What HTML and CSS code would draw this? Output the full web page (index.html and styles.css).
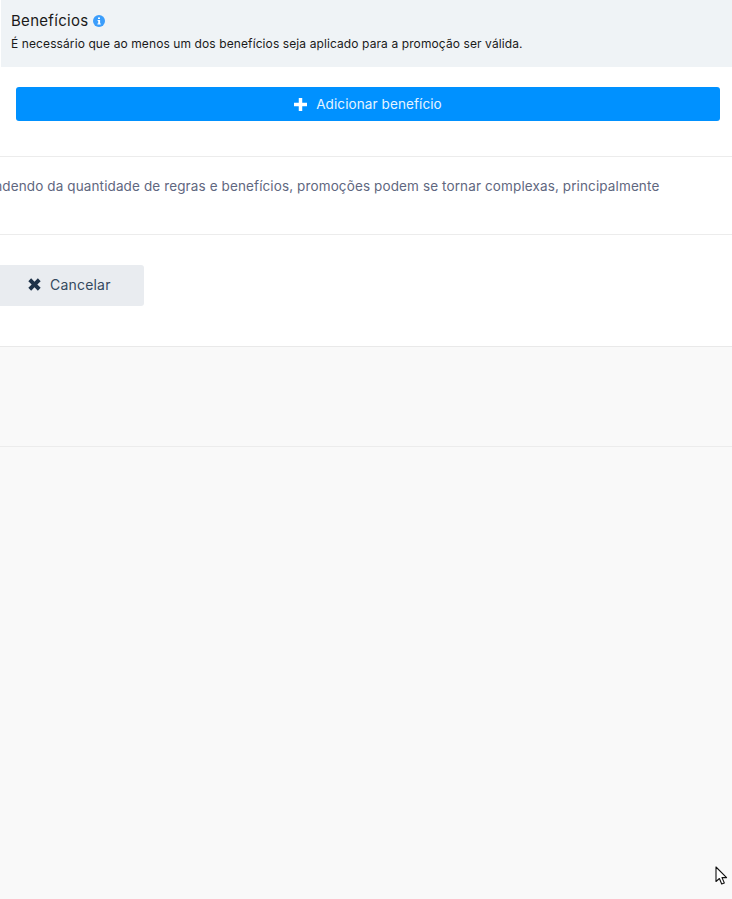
FILE: index.html
```html
<!DOCTYPE html>
<html lang="pt-BR">

<head>
    <meta charset="UTF-8">
    <meta name="viewport" content="width=device-width, initial-scale=1.0">
    <title>Promoção</title>
    <link rel="stylesheet" href="styles.css">
</head>

<body>
    <div class="card">
        <div class="section-header">
            <h2>Benefícios
                <svg class="info-icon" viewBox="0 0 12 12" width="12" height="12" aria-hidden="true">
                    <circle cx="6" cy="6" r="6" fill="#3b9dfb"/>
                    <path d="M5 2.4h2v1.6H5zM4.6 5h2.5v3.4h.7v1.1H4.4V8.4h.8V6.1h-.6z" fill="#fff"/>
                </svg>
            </h2>
            <p>É necessário que ao menos um dos benefícios seja aplicado para a promoção ser válida.</p>
        </div>

        <div class="section-body">
            <button class="button button-primary">
                <svg viewBox="0 0 12 12" width="13" height="13" aria-hidden="true">
                    <path d="M4.4 0h3.2v4.4H12v3.2H7.6V12H4.4V7.6H0V4.4h4.4z" fill="#fff"/>
                </svg>
                Adicionar benefício
            </button>
        </div>

        <div class="notice">
            <p>Dependendo da quantidade de regras e benefícios, promoções podem se tornar complexas, principalmente</p>
        </div>

        <div class="actions">
            <button class="button button-cancel">
                <svg viewBox="0 0 12 12" width="13" height="13" aria-hidden="true">
                    <path d="M2.9.3 6 3.4 9.1.3l2.6 2.6L8.6 6l3.1 3.1-2.6 2.6L6 8.6l-3.1 3.1L.3 9.1 3.4 6 .3 2.9z" fill="#1f3349"/>
                </svg>
                Cancelar
            </button>
        </div>
    </div>

    <div class="empty-row"></div>

    <svg class="cursor" viewBox="0 0 13 20" width="13" height="20" aria-hidden="true">
        <path d="M1 1v14.5l3.4-3 2.3 5.5 2.6-1.1-2.3-5.3h4.6z" fill="#fff" stroke="#111" stroke-width="1.1" stroke-linejoin="round"/>
    </svg>
</body>

</html>
```

FILE: styles.css
```css
html, body {
    height: 100%;
}

body {
    margin: 0;
    background-color: #f9f9f9;
    font-family: 'Inter', 'Open Sans', sans-serif;
    color: #1f3349;
    overflow: hidden;
    position: relative;
}

.card {
    background-color: #fff;
    border-bottom: 1px solid #e9e9e9;
}

.section-header {
    background-color: #eff3f6;
    margin-left: 1px;
    height: 67px;
    padding: 12px 10px 0;
    box-sizing: border-box;
}

.section-header h2 {
    margin: 0;
    font-size: 15px;
    line-height: 18px;
    font-weight: 400;
    letter-spacing: 0.3px;
    color: #1a1a1a;
}

.info-icon {
    vertical-align: -1px;
}

.section-header p {
    margin: 6px 0 0;
    font-size: 12px;
    line-height: 16px;
    letter-spacing: 0.1px;
    color: #1a1a1a;
}

.section-body {
    padding: 20px 12px 35px 16px;
    border-bottom: 1px solid #ececec;
}

.button {
    display: flex;
    align-items: center;
    justify-content: center;
    gap: 9px;
    border: none;
    border-radius: 3px;
    font-family: inherit;
    font-size: 13.5px;
    letter-spacing: 0.1px;
}

.button-primary {
    width: 100%;
    height: 34px;
    background-color: #0091ff;
    color: #e6f4ff;
}

.notice {
    height: 77px;
    overflow: hidden;
    border-bottom: 1px solid #ececec;
}

.notice p {
    margin: 20px 0 0 -40px;
    white-space: nowrap;
    font-size: 13.5px;
    line-height: 18px;
    letter-spacing: 0.12px;
    color: #5f6780;
}

.actions {
    padding: 30px 0 40px;
}

.button-cancel {
    width: 144px;
    height: 41px;
    padding: 0 0 2px 28px;
    justify-content: flex-start;
    background-color: #e9ecf0;
    color: #34495e;
    font-size: 14px;
    letter-spacing: 0.2px;
    border-radius: 0 3px 3px 0;
}

.empty-row {
    height: 99px;
    border-bottom: 1px solid #ececec;
}

.cursor {
    position: absolute;
    left: 715px;
    top: 866px;
}
```
